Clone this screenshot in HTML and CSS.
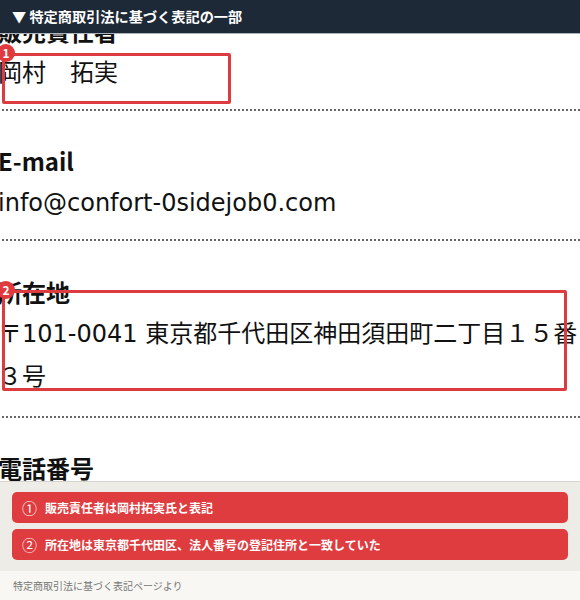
FILE: index.html
```html
<!DOCTYPE html>
<html lang="ja">
<head>
<meta charset="utf-8">
<link rel="stylesheet" href="styles.css">
</head>
<body>
<div class="page">
  <div class="shot">
    <div class="content">
      <section class="item">
        <h2 class="label">販売責任者</h2>
        <p class="value">岡村　拓実<span class="mark mark-1"><span class="badge">1</span></span></p>
      </section>
      <section class="item">
        <h2 class="label">E-mail</h2>
        <p class="value">info@confort-0sidejob0.com</p>
      </section>
      <section class="item item-addr">
        <h2 class="label">所在地</h2>
        <p class="value">〒101-0041 東京都千代田区神田須田町二丁目１５番３号<span class="mark mark-2"><span class="badge">2</span></span></p>
      </section>
      <section class="item">
        <h2 class="label">電話番号</h2>
        <p class="value">03-0000-0000</p>
      </section>
    </div>
    <div class="topbar">▼ 特定商取引法に基づく表記の一部</div>
  </div>
  <div class="notes">
    <div class="note"><span class="num">①</span>販売責任者は岡村拓実氏と表記</div>
    <div class="note"><span class="num">②</span>所在地は東京都千代田区、法人番号の登記住所と一致していた</div>
  </div>
  <div class="source">特定商取引法に基づく表記ページより</div>
</div>
</body>
</html>
```
FILE: styles.css
```css
* { box-sizing: border-box; }
html, body { margin: 0; padding: 0; background: #fff; }
body {
  font-family: "Noto Sans CJK JP", "Noto Sans", sans-serif;
  color: #111;
}
.page {
  width: 580px;
  height: 600px;
  display: flex;
  flex-direction: column;
  overflow: hidden;
}
.shot {
  position: relative;
  height: 481px;
  flex: none;
  overflow: hidden;
  background: #fff;
}
.topbar {
  position: absolute;
  top: 0;
  left: 0;
  right: 0;
  height: 34px;
  background: #1e2937;
  border-bottom: 1px solid #aab2bb;
  color: #fff;
  font-weight: 700;
  font-size: 14.2px;
  line-height: 33px;
  padding-left: 12px;
  white-space: nowrap;
}
.content {
  margin-top: -20px;
  margin-left: -2px;
  width: 582px;
}
.item {
  padding: 34.5px 0 14px;
  border-bottom: 2px dotted #666;
}
.item-addr { padding-bottom: 17px; }
.label {
  margin: 0 0 5px;
  font-size: 24px;
  line-height: 32px;
  font-weight: 700;
}
.value {
  position: relative;
  margin: 0;
  font-family: "DejaVu Sans", "Noto Sans CJK JP", sans-serif;
  font-size: 24px;
  line-height: 43px;
  font-weight: 400;
}
.mark {
  position: absolute;
  border: 3px solid #dc3b40;
  border-radius: 2px;
}
.mark-1 { left: 4px; top: 1.5px; width: 229px; height: 51px; }
.mark-2 { left: 4px; top: -22.5px; width: 565px; height: 101px; }
.badge {
  position: absolute;
  left: -8px;
  top: -12px;
  width: 18px;
  height: 18px;
  border-radius: 50%;
  background: #e0393e;
  color: #fff;
  font-family: "Noto Sans CJK JP", sans-serif;
  font-size: 12px;
  font-weight: 700;
  line-height: 18px;
  text-align: center;
}
.notes {
  flex: none;
  background: #eeece6;
  border-top: 1px solid #d6d3cc;
  padding: 10px 12px 11px;
  display: flex;
  flex-direction: column;
  gap: 6px;
}
.note {
  height: 31px;
  background: #df3c40;
  border-radius: 5px;
  color: #fff;
  font-size: 12px;
  font-weight: 700;
  display: flex;
  align-items: center;
  padding-left: 10px;
  white-space: nowrap;
}
.num {
  font-size: 15px;
  font-weight: 400;
  margin-right: 8px;
}
.source {
  flex: 1;
  background: #f8f7f3;
  color: #777;
  font-size: 10px;
  padding: 7px 0 0 13px;
}
```
